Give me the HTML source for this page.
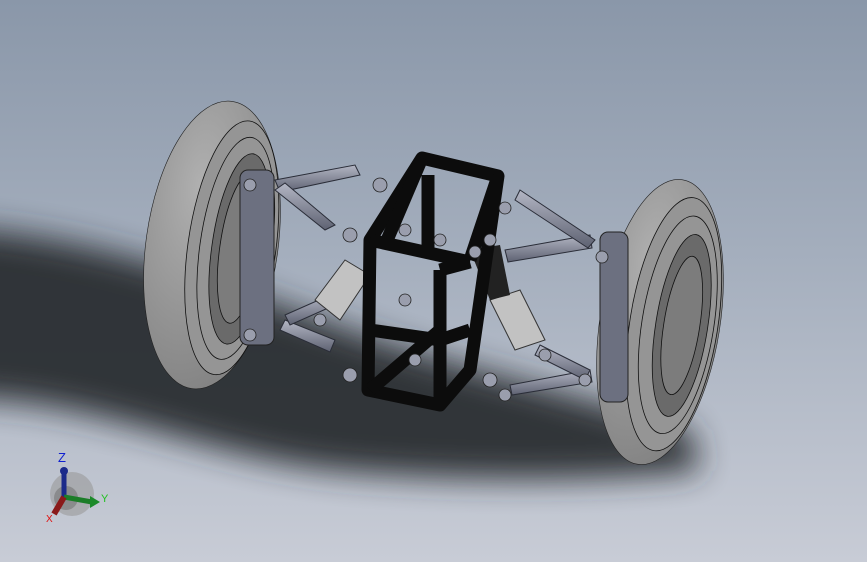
<!DOCTYPE html>
<html><head><style>
html,body{margin:0;padding:0;width:867px;height:562px;overflow:hidden;background:#b5bcc8}
svg{display:block}
text{font-family:"Liberation Sans",sans-serif}
</style></head><body>
<svg width="867" height="562" viewBox="0 0 867 562" xmlns="http://www.w3.org/2000/svg">
<defs>
<linearGradient id="bg" x1="0" y1="0" x2="0" y2="1">
<stop offset="0" stop-color="#8a97a9"/><stop offset="0.45" stop-color="#a4aebd"/><stop offset="1" stop-color="#c8ccd6"/>
</linearGradient>
<filter id="blur" x="-20%" y="-50%" width="140%" height="200%"><feGaussianBlur stdDeviation="16"/></filter>
<radialGradient id="tire" cx="0.35" cy="0.3" r="0.8">
<stop offset="0" stop-color="#b0b0b0"/><stop offset="1" stop-color="#808080"/>
</radialGradient>
<linearGradient id="arm" x1="0" y1="0" x2="0" y2="1"><stop offset="0" stop-color="#b3b6c4"/><stop offset="1" stop-color="#5e6272"/></linearGradient>
</defs>
<rect width="867" height="562" fill="url(#bg)"/>
<path d="M-40 228 C100 236 240 290 350 330 C450 365 580 395 690 430 L700 470 C600 482 450 482 330 470 C200 455 100 400 -40 398 Z" fill="#2a2d33" filter="url(#blur)" opacity="0.95"/>
<!-- left wheel -->
<g transform="rotate(8 212 245)">
<ellipse cx="212" cy="245" rx="66" ry="145" fill="url(#tire)" stroke="#222" stroke-width="0.6"/>
<ellipse cx="232" cy="245" rx="44" ry="128" fill="#959595" stroke="#111" stroke-width="0.8"/>
<ellipse cx="236" cy="245" rx="36" ry="112" fill="none" stroke="#111" stroke-width="0.8"/>
<ellipse cx="240" cy="245" rx="28" ry="96" fill="#6a6a6a" stroke="#111" stroke-width="0.8"/>
<ellipse cx="240" cy="245" rx="20" ry="75" fill="#7c7c7c" stroke="#111" stroke-width="0.8"/>
</g>
<!-- right wheel -->
<g transform="rotate(9 660 322)">
<ellipse cx="660" cy="322" rx="60" ry="144" fill="url(#tire)" stroke="#222" stroke-width="0.6"/>
<ellipse cx="674" cy="322" rx="44" ry="128" fill="#959595" stroke="#111" stroke-width="0.8"/>
<ellipse cx="678" cy="322" rx="36" ry="110" fill="none" stroke="#111" stroke-width="0.8"/>
<ellipse cx="682" cy="322" rx="26" ry="92" fill="#6a6a6a" stroke="#111" stroke-width="0.8"/>
<ellipse cx="682" cy="322" rx="18" ry="70" fill="#7c7c7c" stroke="#111" stroke-width="0.8"/>
</g>
<!-- uprights -->
<rect x="240" y="170" width="34" height="175" rx="8" fill="#6c7080" stroke="#222"/>
<rect x="600" y="232" width="28" height="170" rx="8" fill="#6c7080" stroke="#222"/>
<!-- arms -->
<g stroke="#2a2d38" stroke-width="1" fill="url(#arm)">
<path d="M275 180 L355 165 L360 175 L280 192Z"/>
<path d="M275 190 L325 230 L335 225 L285 183Z"/>
<path d="M285 320 L335 340 L330 352 L280 330Z"/>
<path d="M285 315 L330 295 L335 305 L290 325Z"/>
<path d="M505 250 L590 235 L592 248 L508 262Z"/>
<path d="M520 190 L595 240 L588 248 L515 200Z"/>
<path d="M510 385 L590 370 L592 382 L512 395Z"/>
<path d="M540 345 L590 370 L585 380 L535 355Z"/>
</g>
<!-- shocks -->
<path d="M315 300 L345 260 L370 275 L340 320Z" fill="#c2c2c2" stroke="#333"/>
<path d="M490 300 L520 290 L545 340 L515 350Z" fill="#c2c2c2" stroke="#333"/>
<path d="M470 250 L500 245 L510 295 L490 300Z" fill="#222"/>
<!-- frame -->
<g fill="none" stroke="#0c0c0c" stroke-width="13" stroke-linejoin="round">
<path d="M422 158 L498 176 L470 370 L440 405 L368 390 L370 240 Z"/>
<path d="M422 158 L385 245"/>
<path d="M498 176 L470 260"/>
<path d="M370 240 L470 262"/>
<path d="M440 405 L440 270 M470 262 L440 270"/>
<path d="M370 330 L440 340 M470 330 L440 340 M370 390 L440 330"/>
<path d="M428 175 L428 255"/>
</g>
<!-- bolts -->
<g fill="#9a9ead" stroke="#222" stroke-width="0.8">
<circle cx="250" cy="185" r="6"/><circle cx="250" cy="335" r="6"/><circle cx="602" cy="257" r="6"/><circle cx="380" cy="185" r="7"/><circle cx="350" cy="235" r="7"/><circle cx="405" cy="230" r="6"/><circle cx="440" cy="240" r="6"/><circle cx="505" cy="208" r="6"/><circle cx="490" cy="240" r="6"/><circle cx="475" cy="252" r="6"/><circle cx="350" cy="375" r="7"/><circle cx="415" cy="360" r="6"/><circle cx="490" cy="380" r="7"/><circle cx="545" cy="355" r="6"/><circle cx="405" cy="300" r="6"/><circle cx="320" cy="320" r="6"/><circle cx="505" cy="395" r="6"/><circle cx="585" cy="380" r="6"/>
</g>
<!-- triad -->
<circle cx="72" cy="494" r="22" fill="#9a9a9a" opacity="0.6"/>
<circle cx="66" cy="498" r="12" fill="#777" opacity="0.6"/>
<line x1="64" y1="497" x2="64" y2="472" stroke="#1b2a8a" stroke-width="5"/>
<circle cx="64" cy="471" r="4" fill="#1b2a8a"/>
<line x1="64" y1="497" x2="92" y2="502" stroke="#1c7d28" stroke-width="5"/>
<path d="M90 496 L100 502 L90 508Z" fill="#1c8a2a"/>
<line x1="64" y1="497" x2="54" y2="514" stroke="#8a1a1a" stroke-width="6"/>
<text x="58" y="462" font-size="13" fill="#1020d0">Z</text>
<text x="101" y="502" font-size="11" fill="#20c020">Y</text>
<text x="46" y="522" font-size="10" fill="#e01010">X</text>
</svg>
</body></html>
